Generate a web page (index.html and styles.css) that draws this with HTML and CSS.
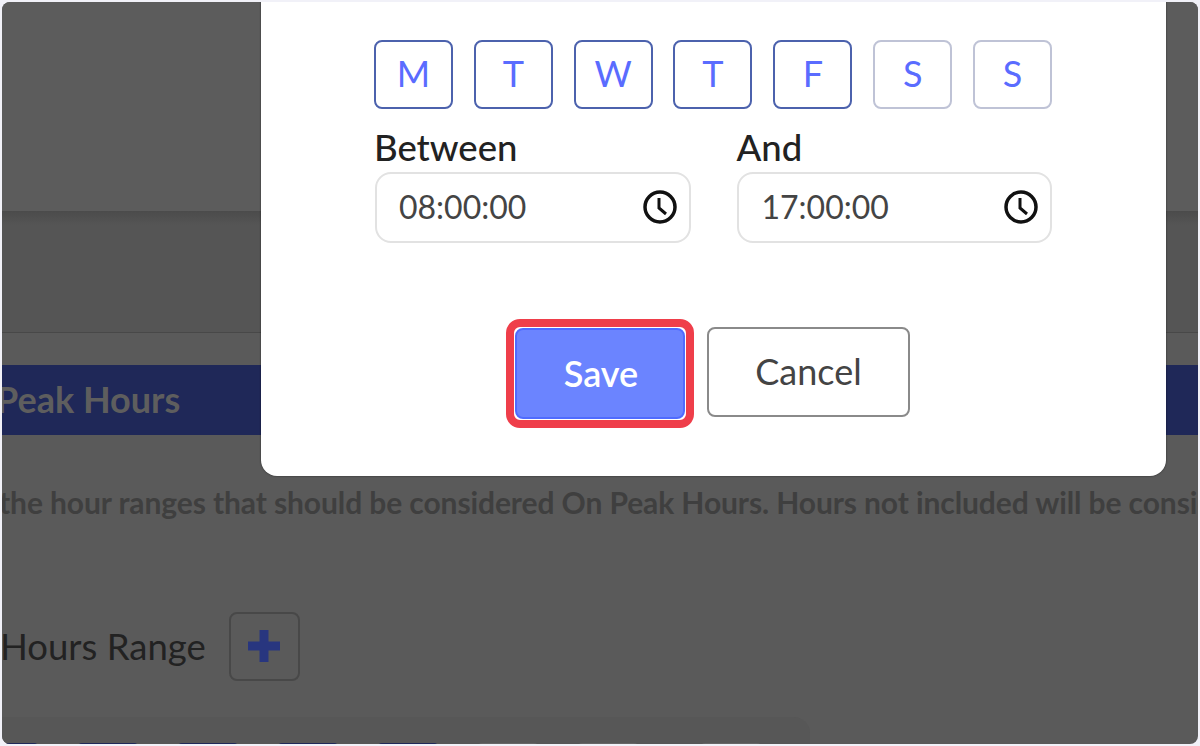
FILE: index.html
```html
<!DOCTYPE html>
<html lang="en">
<head>
    <meta charset="UTF-8">
    <title>On Peak Hours</title>
    <link rel="stylesheet" href="styles.css">
</head>
<body>
    <div class="frame">
        <div class="page">
            <div class="top-band"></div>
            <div class="sub-band"></div>
            <div class="section-bar">Peak Hours</div>
            <p class="section-text">the hour ranges that should be considered On Peak Hours. Hours not included will be considered Off Peak Hours.</p>
            <div class="range-row">
                <span class="range-label">Hours Range</span>
                <span class="add-btn">
                    <svg width="32" height="32" viewBox="0 0 32 32"><path d="M11.500 0h9v11.500h11.500v9h-11.500v11.500h-9v-11.500h-11.500v-9h11.500z" fill="#28367f"/></svg>
                </span>
            </div>
            <div class="table-card">
                <span class="chip on"></span>
                <span class="chip on"></span>
                <span class="chip on"></span>
                <span class="chip on"></span>
                <span class="chip on"></span>
                <span class="chip"></span>
                <span class="chip"></span>
                <span class="chip"></span>
            </div>
        </div>

        <div class="modal">
            <div class="days">
                <button class="day on">M</button>
                <button class="day on">T</button>
                <button class="day on">W</button>
                <button class="day on">T</button>
                <button class="day on">F</button>
                <button class="day">S</button>
                <button class="day">S</button>
            </div>
            <div class="times">
                <div class="time-field">
                    <label class="time-label">Between</label>
                    <div class="time-input">
                        <span>08:00:00</span>
                        <svg width="36" height="36" viewBox="0 0 36 36" fill="none" stroke="#111" stroke-width="3.500"><circle cx="18" cy="18" r="15"/><path d="M17 9v10l7 6" stroke-width="3"/></svg>
                    </div>
                </div>
                <div class="time-field">
                    <label class="time-label">And</label>
                    <div class="time-input">
                        <span>17:00:00</span>
                        <svg width="36" height="36" viewBox="0 0 36 36" fill="none" stroke="#111" stroke-width="3.500"><circle cx="18" cy="18" r="15"/><path d="M17 9v10l7 6" stroke-width="3"/></svg>
                    </div>
                </div>
            </div>
            <div class="actions">
                <span class="highlight"><button class="btn btn-save">Save</button></span>
                <button class="btn btn-cancel">Cancel</button>
            </div>
        </div>
    </div>
</body>
</html>
```

FILE: styles.css
```css
* {
    box-sizing: border-box;
}
html, body {
    height: 100%;
}
body {
    margin: 0;
    padding: 2px;
    background: #f1f1f8;
    font-family: Lato, "Liberation Sans", sans-serif;
}
.frame {
    position: relative;
    height: 742px;
    border-radius: 8px;
    overflow: hidden;
    background: #5a5a5a;
}
.top-band {
    height: 209px;
    background: #5c5c5c;
}
.sub-band {
    height: 122px;
    background: linear-gradient(#4b4b4b, #555 14px);
    border-bottom: 1px solid #484848;
}
.section-bar {
    margin-top: 32px;
    height: 70px;
    margin-left: -6px;
    background: #1f2858;
    color: #5e5e5e;
    font-size: 36px;
    font-weight: 700;
    line-height: 69px;
}
.section-text {
    margin: 49px 0 0 -3px;
    color: #3f3f3f;
    font-size: 30px;
    font-weight: 700;
    line-height: 36px;
    letter-spacing: -0.1px;
    white-space: nowrap;
}
.range-row {
    display: flex;
    align-items: center;
    gap: 23px;
    margin-top: 91px;
    margin-left: -2px;
    height: 70px;
}
.range-label {
    color: #222;
    font-size: 36.500px;
}
.add-btn {
    display: flex;
    align-items: center;
    justify-content: center;
    width: 71px;
    height: 69px;
    border: 2px solid #484848;
    border-radius: 8px;
}
.table-card {
    display: flex;
    gap: 40px;
    width: 808px;
    height: 60px;
    margin-top: 36px;
    padding-top: 26px;
    background: #575757;
    border-radius: 0 16px 0 0;
}
.chip {
    width: 60px;
    height: 10px;
    background: #666;
    border-radius: 4px 4px 0 0;
}
.chip:first-child {
    margin-left: -24px;
}
.chip:last-child {
    margin-left: 23px;
}
.chip.on {
    background: #1f2858;
}
.modal {
    position: absolute;
    top: -20px;
    left: 259px;
    width: 905px;
    height: 494px;
    padding: 58px 114px 0 113px;
    background: #fff;
    border-radius: 16px;
    box-shadow: 0 0 2px rgba(0, 0, 0, 0.6);
}
.days {
    display: flex;
    justify-content: space-between;
}
.day {
    width: 79px;
    height: 69px;
    padding: 0 0 3px;
    background: #fff;
    border: 2px solid #bfc3d6;
    border-radius: 8px;
    color: #5a6cff;
    font-family: inherit;
    font-size: 36px;
}
.day.on {
    border-color: #4c62ad;
}
.times {
    display: flex;
    gap: 46px;
    margin-top: 17px;
    padding-left: 1px;
}
.time-field {
    flex: 1;
}
.time-label {
    display: block;
    margin-left: -1px;
    color: #222;
    font-size: 36.500px;
    font-weight: 500;
    line-height: 42px;
}
.time-field:last-child .time-label {
    margin-left: 0;
}
.time-input {
    display: flex;
    align-items: center;
    justify-content: space-between;
    height: 71px;
    margin-top: 4px;
    padding: 0 11px 3px 22px;
    border: 2px solid #e2e2e2;
    border-radius: 16px;
    color: #444;
    font-size: 32px;
}
.time-field:last-child .time-input {
    padding-left: 23px;
}
.time-input svg {
    margin-top: 1px;
}
.actions {
    display: flex;
    align-items: flex-start;
    gap: 13px;
    margin-top: 76px;
    margin-left: 132px;
}
.highlight {
    display: block;
    padding: 1px;
    border: 8px solid #ef3e4a;
    border-radius: 14px;
}
.btn {
    display: block;
    height: 90px;
    padding: 0 0 2px;
    border-radius: 8px;
    font-family: inherit;
    font-size: 36px;
}
.btn-save {
    width: 170px;
    height: 91px;
    padding-left: 2px;
    background: #6b84ff;
    border: 2px solid #4f6bff;
    color: #fff;
    font-weight: 600;
}
.btn-cancel {
    width: 203px;
    margin-top: 8px;
    background: #fff;
    border: 2px solid #8a8a8a;
    color: #444;
}
```
